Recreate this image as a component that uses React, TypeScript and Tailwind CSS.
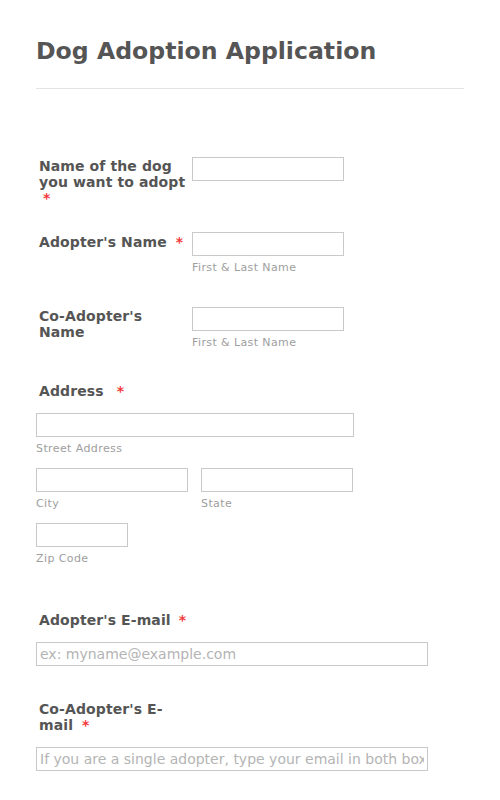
import React from "react";

const font = { fontFamily: '"DejaVu Sans", Verdana, sans-serif' };

function Star({ cls = "ml-[4px]" }: { cls?: string }) {
  return <span className={`${cls} text-[#f23a3c]`}>*</span>;
}

function Input({ w, placeholder }: { w: string; placeholder?: string }) {
  return (
    <input
      type="text"
      placeholder={placeholder}
      className={`${w} h-[24px] border border-[#c9c9c9] bg-white px-[3px] text-[14px] text-[#555] placeholder:text-[#b4b4b4] outline-none block`}
      style={font}
    />
  );
}

function Sub({ children }: { children: React.ReactNode }) {
  return (
    <div className="mt-[5px] text-[11px] leading-[14px] text-[#9e9e9e] tracking-[0.4px]">
      {children}
    </div>
  );
}

export default function App() {
  return (
    <div className="min-h-[800px] bg-white px-[36px] text-[#555]" style={font}>
      <h1 className="pt-[37px] text-[23.6px] leading-[28px] font-bold text-[#555]">
        Dog Adoption Application
      </h1>
      <div className="mt-[23px] h-px bg-[#e3e3e3]" />

      {/* Row 1 */}
      <div className="mt-[68px] flex items-start">
        <label className="w-[156px] pl-[3px] pr-[3px] pt-[1px] text-[14px] leading-[16px] font-bold tracking-[0.1px]">
          Name of the dog you want to adopt <Star />
        </label>
        <Input w="w-[152px]" />
      </div>

      {/* Row 2 */}
      <div className="mt-[26px] flex items-start">
        <label className="w-[156px] pl-[3px] pr-[3px] pt-[2px] text-[14px] leading-[16px] font-bold tracking-[0.1px]">
          Adopter's Name <Star />
        </label>
        <div>
          <Input w="w-[152px]" />
          <Sub>First &amp; Last Name</Sub>
        </div>
      </div>

      {/* Row 3 */}
      <div className="mt-[32px] flex items-start">
        <label className="w-[156px] pl-[3px] pr-[3px] pt-[1px] text-[14px] leading-[16px] font-bold tracking-[0.1px]">
          Co-Adopter's Name
        </label>
        <div>
          <Input w="w-[152px]" />
          <Sub>First &amp; Last Name</Sub>
        </div>
      </div>

      {/* Address */}
      <div className="mt-[32px]">
        <label className="block w-[156px] pl-[3px] pt-[1px] text-[14px] leading-[16px] font-bold tracking-[0.1px]">
          Address <Star cls="ml-[8px]" />
        </label>
        <div className="mt-[14px]">
          <Input w="w-[318px]" />
          <Sub>Street Address</Sub>
        </div>
        <div className="mt-[12px] flex gap-[13px]">
          <div>
            <Input w="w-[152px]" />
            <Sub>City</Sub>
          </div>
          <div>
            <Input w="w-[152px]" />
            <Sub>State</Sub>
          </div>
        </div>
        <div className="mt-[12px]">
          <Input w="w-[92px]" />
          <Sub>Zip Code</Sub>
        </div>
      </div>

      {/* Adopter's E-mail */}
      <div className="mt-[45px]">
        <label className="block w-[156px] pl-[3px] pt-[1px] text-[14px] leading-[16px] font-bold tracking-[0.1px]">
          Adopter's E-mail <Star cls="ml-[3px]" />
        </label>
        <div className="mt-[14px]">
          <Input w="w-[392px]" placeholder="ex: myname@example.com" />
        </div>
      </div>

      {/* Co-Adopter's E-mail */}
      <div className="mt-[34px]">
        <label className="block w-[156px] pl-[3px] pr-[3px] pt-[1px] text-[14px] leading-[16px] font-bold tracking-[0.1px]">
          Co-Adopter's E-mail <Star />
        </label>
        <div className="mt-[14px]">
          <Input
            w="w-[392px]"
            placeholder="If you are a single adopter, type your email in both boxes"
          />
        </div>
      </div>
    </div>
  );
}
